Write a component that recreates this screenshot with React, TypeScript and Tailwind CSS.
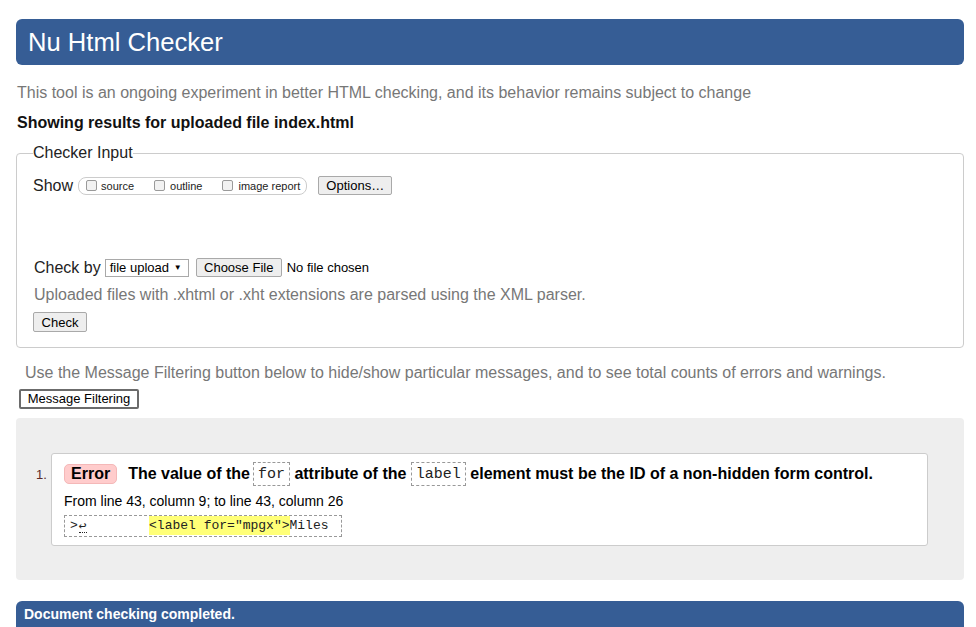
import React from 'react';

const Checkbox = () => (
    <span className="inline-block w-[11px] h-[11px] -mt-[3px] border border-[#9a9a9a] rounded-[2px] bg-[#f2f2f2]" />
);

const Btn = ({ children, className = '' }: { children: React.ReactNode; className?: string }) => (
    <button
        type="button"
        className={`inline-flex items-center justify-center h-[19px] px-[8px] text-[13px] text-black bg-[#eeeeee] border border-[#a9a9a9] rounded-[2px] leading-none whitespace-nowrap ${className}`}
    >
        {children}
    </button>
);

const Code = ({ children }: { children: React.ReactNode }) => (
    <code className="inline-flex items-center h-[24px] px-[4px] pt-[2px] border border-dashed border-[#999] font-['Liberation_Mono',monospace] text-[15px] leading-[16px] font-normal text-[#222]">
        {children}
    </code>
);

export default function App() {
    return (
        <div className="min-h-[627px] bg-white pl-4 pr-3 pt-[19px] font-['Liberation_Sans',Arial,sans-serif] text-[#222]">
            <h1 className="h-[46px] flex items-center px-[12px] bg-[#365d95] rounded-[6px] text-white text-[25.6px] font-normal">
                Nu Html Checker
            </h1>

            <p className="mt-[19px] pl-[1px] text-[16px] leading-[18px] text-[#777]">
                This tool is an ongoing experiment in better HTML checking, and its behavior remains subject to change
            </p>

            <p className="mt-[12px] pl-[1px] text-[16px] leading-[18px] font-bold text-[#111]">
                Showing results for uploaded file index.html
            </p>

            <fieldset className="mt-[12px] border border-[#cccccc] rounded-[4px] px-[16px] pt-[14px] pb-[13px]">
                <legend className="px-0 text-[16px] leading-[18px] text-[#222]">Checker Input</legend>

                <div className="flex items-center h-[19px]">
                    <span className="text-[16px] leading-[18px]">Show</span>
                    <span className="ml-[5px] flex items-center h-[18px] pl-[7px] pr-[6px] border border-[#cccccc] rounded-[8px] text-[11px] pt-[2px]">
                        <Checkbox />
                        <span className="ml-[4px]">source</span>
                        <span className="ml-[20px] flex"><Checkbox /></span>
                        <span className="ml-[5px]">outline</span>
                        <span className="ml-[20px] flex"><Checkbox /></span>
                        <span className="ml-[5px]">image report</span>
                    </span>
                    <Btn className="ml-[11px] w-[74px]">Options…</Btn>
                </div>

                <div className="mt-[63px] flex items-center h-[19px]">
                    <span className="pl-[1px] text-[16px] leading-[18px]">Check by</span>
                    <span className="ml-[4px] flex items-center justify-between w-[84px] h-[18px] pl-[4px] pr-[6px] border border-[#a9a9a9] bg-white text-[13px] text-black">
                        <span>file upload</span>
                        <span className="text-[8px]">▼</span>
                    </span>
                    <Btn className="ml-[7px] w-[86px]">Choose File</Btn>
                    <span className="ml-[5px] text-[13px] text-black">No file chosen</span>
                </div>

                <p className="mt-[9px] pl-[1px] text-[16px] leading-[18px] text-[#777]">
                    Uploaded files with .xhtml or .xht extensions are parsed using the XML parser.
                </p>

                <Btn className="mt-[8px] w-[54px] h-[20px]">Check</Btn>
            </fieldset>

            <p className="mt-[16px] pl-[9px] text-[16px] leading-[18px] text-[#777]">
                Use the Message Filtering button below to hide/show particular messages, and to see total counts of errors and warnings.
            </p>

            <button
                type="button"
                className="mt-[7px] ml-[3px] h-[20px] w-[120px] flex items-center justify-center border-2 border-[#6b6b6b] rounded-[2px] bg-white text-[13px] text-black leading-none"
            >
                Message Filtering
            </button>

            <div className="mt-[9px] flex bg-[#eeeeee] rounded-[4px] pl-[20px] pr-[36px] pt-[35px] pb-[34px]">
                <span className="w-[15px] mt-[14px] text-[13px] leading-[16px] text-[#5a2a2a]">1.</span>
                <div className="flex-1 bg-white border border-[#cccccc] rounded-[3px] px-[12px] pt-[8px] pb-[8px]">
                    <div className="flex items-center h-[24px] text-[16px] font-bold text-black whitespace-pre">
                        <span className="inline-flex items-center h-[20px] px-[6px] bg-[#ffcccc] border border-[#f4b8b8] rounded-[5px]">
                            Error
                        </span>
                        <span className="ml-[11px]">The value of the</span>
                        <span className="ml-[3px] flex"><Code>for</Code></span>
                        <span> attribute of the </span>
                        <Code>label</Code>
                        <span> element must be the ID of a non-hidden form control.</span>
                    </div>
                    <p className="mt-[7px] text-[14px] leading-[16px] text-black">
                        From line 43, column 9; to line 43, column 26
                    </p>
                    <div className="mt-[6px] inline-flex items-center h-[22px] px-[5px] border border-dashed border-[#999] font-['Liberation_Mono','DejaVu_Sans_Mono',monospace] text-[13px] text-[#222] whitespace-pre">
                        <span>&gt;</span>
                        <span className="ml-[1px] border-b border-dotted border-[#222] leading-[13px] font-['DejaVu_Sans_Mono',monospace] text-[13px]">↩</span>
                        <span>{'        '}</span>
                        <span className="bg-[#ffff77]">&lt;label for="mpgx"&gt;</span>
                        <span>Miles</span>
                        <span>{' '}</span>
                    </div>
                </div>
            </div>

            <div className="mt-[21px] h-[26px] bg-[#365d95] rounded-t-[6px] px-[8px] pt-[5px]">
                <p className="text-[14px] leading-[16px] font-bold text-white">Document checking completed.</p>
            </div>
        </div>
    );
}
